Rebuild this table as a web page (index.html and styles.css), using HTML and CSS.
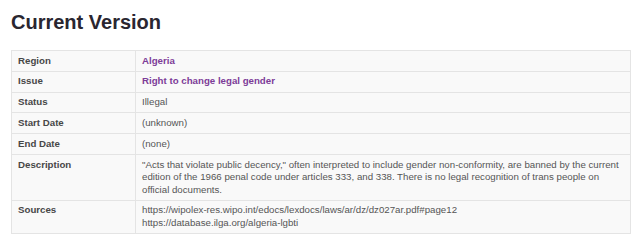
FILE: index.html
```html
<!DOCTYPE html>
<html>
<head>
<meta charset="utf-8">
<link rel="stylesheet" href="styles.css">
</head>
<body>
<main class="page">
  <h1 class="title">Current Version</h1>
  <table class="info">
    <tbody>
      <tr><th>Region</th><td><a class="link" href="#">Algeria</a></td></tr>
      <tr><th>Issue</th><td><a class="link" href="#">Right to change legal gender</a></td></tr>
      <tr><th>Status</th><td>Illegal</td></tr>
      <tr><th>Start Date</th><td>(unknown)</td></tr>
      <tr><th>End Date</th><td>(none)</td></tr>
      <tr><th>Description</th><td>"Acts that violate public decency," often interpreted to include gender non-conformity, are banned by the current edition of the 1966 penal code under articles 333, and 338. There is no legal recognition of trans people on official documents.</td></tr>
      <tr><th>Sources</th><td>https://wipolex-res.wipo.int/edocs/lexdocs/laws/ar/dz/dz027ar.pdf#page12<br>https://database.ilga.org/algeria-lgbti</td></tr>
    </tbody>
  </table>
</main>
</body>
</html>
```

FILE: styles.css
```css
html, body {
  margin: 0;
  padding: 0;
  background: #ffffff;
}
.page {
  padding: 0 9px 0 11px;
  font-family: "Liberation Sans", Arial, sans-serif;
}
.title {
  margin: 11px 0 16px 0;
  font-size: 20px;
  line-height: 23px;
  font-weight: bold;
  color: #2a2630;
}
.info {
  width: 620px;
  border-collapse: collapse;
  background: #f9f9f9;
  border: 1px solid #dddddd;
  font-size: 9.7px;
  line-height: 12.5px;
  color: #555555;
}
.info th, .info td {
  border: 1px solid #e4e4e4;
  padding: 3.7px 6px 3.6px 6px;
  text-align: left;
  vertical-align: top;
}
.info th {
  width: 111px;
  font-weight: bold;
  color: #474747;
}
.link {
  color: #7d3c98;
  font-weight: bold;
  text-decoration: none;
}
```
